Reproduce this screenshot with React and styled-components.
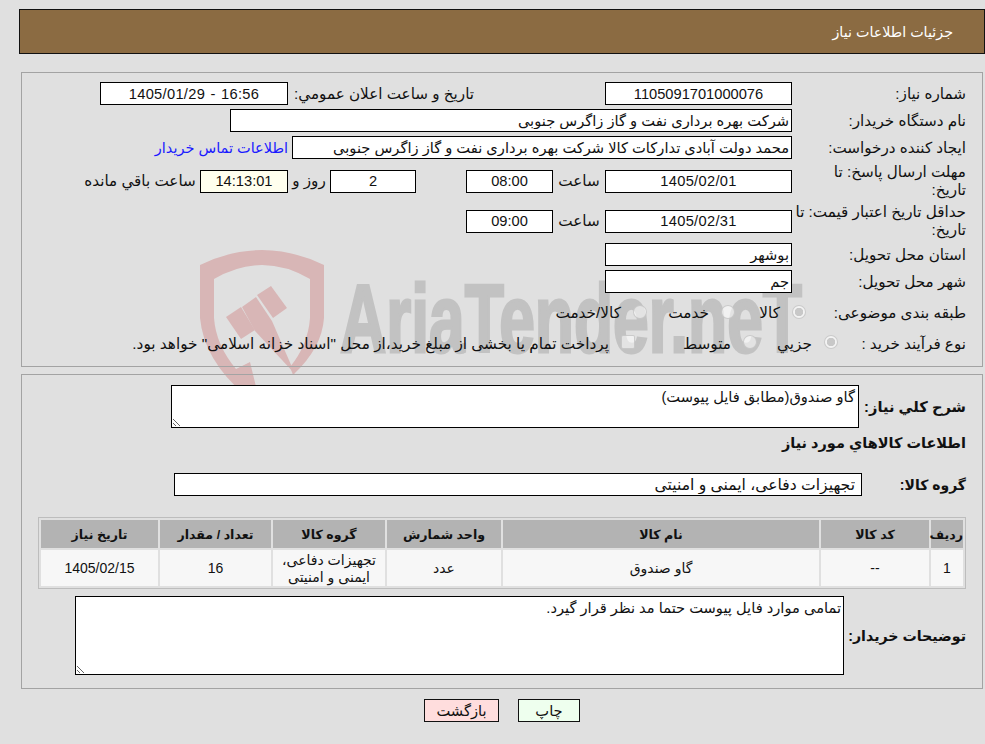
import React from 'react';
import styled, { createGlobalStyle } from 'styled-components';

const GlobalStyle = createGlobalStyle`
  * {
    box-sizing: border-box;
  }
  html,
  body {
    margin: 0;
    height: 744px;
    overflow: hidden;
    background: #e0e0e0;
  }
  body {
    font-family: 'Liberation Sans', 'DejaVu Sans', sans-serif;
    font-size: 14.67px;
    color: #111;
  }
`;

const Page = styled.div`
  position: relative;
  width: 985px;
  height: 744px;
  padding-top: 9px;
`;

/* AriaTender stamp sits behind the whole form */
const Watermark = styled.svg`
  position: absolute;
  top: 0;
  left: 0;
  width: 985px;
  height: 744px;
`;

const Content = styled.div`
  position: relative;
`;

const Header = styled.div`
  display: flex;
  align-items: center;
  height: 45px;
  margin-left: 19px;
  padding-right: 31px;
  background: #8b6b42;
  border: 1px solid #111;
  color: #fff;
  font-size: 14.3px;
`;

const Panel = styled.section`
  width: 962px;
  margin: ${(props) => props.$top}px 2px 0 0;
  padding: ${(props) => props.$pad};
  border: 1px solid #a3a3a3;
`;

const Row = styled.div`
  display: flex;
  align-items: center;
  height: ${(props) => props.$h}px;
`;

const Label = styled.div`
  flex: none;
  width: ${(props) => props.$w}px;
  line-height: 18px;
  font-size: ${(props) => props.$size || 15.2}px;
  font-weight: ${(props) => (props.$bold ? 700 : 400)};
`;

const Field = styled.input`
  flex: none;
  width: ${(props) => props.$w}px;
  height: 23px;
  padding: 0 2px;
  border: 1px solid #000;
  border-radius: 0;
  outline: none;
  background: ${(props) => props.$bg || '#fff'};
  color: #111;
  font: inherit;
  text-align: ${(props) => props.$align || 'center'};
`;

const DateField = styled(Field)`
  letter-spacing: 0.3px;
`;

const DateRangeField = styled(DateField)`
  word-spacing: 1px;
`;

const GroupField = styled(Field)`
  padding-right: 6px;
  font-size: 15.6px;
`;

const Caption = styled.div`
  flex: none;
  width: ${(props) => props.$w}px;
  font-size: 15.2px;
  text-align: ${(props) => props.$align || 'center'};
`;

const Spacer = styled.div`
  flex: none;
  width: ${(props) => props.$w}px;
`;

const ContactLink = styled.a`
  margin-right: 4px;
  color: #1a1aff;
  font-size: 14.5px;
  text-decoration: none;
`;

const Option = styled.label`
  display: flex;
  flex: none;
  align-items: center;
  gap: 12px;
  width: ${(props) => props.$w}px;
  font-size: 15.3px;
  white-space: nowrap;
`;

/* disabled controls are washed out so the stamp shows through them */
const Check = styled.input`
  flex: none;
  appearance: none;
  width: 14px;
  height: 14px;
  margin: 0 0 3px;
  border: 1px solid rgba(190, 190, 190, 0.75);
  border-radius: 2px;
  background: rgba(255, 255, 255, 0.55);

  &[type='radio'] {
    border-radius: 50%;
  }

  &:checked {
    background: radial-gradient(circle, #c8c8c8 0 4px, rgba(255, 255, 255, 0.6) 4.5px);
  }
`;

const Note = styled.textarea`
  flex: none;
  display: block;
  width: ${(props) => props.$w}px;
  height: ${(props) => props.$h}px;
  padding: 2px ${(props) => props.$inset || 2}px 2px 2px;
  border: 1px solid #000;
  border-radius: 0;
  outline: none;
  background: #fff;
  color: #111;
  font: inherit;
  overflow: hidden;
`;

const SectionTitle = styled.div`
  display: flex;
  align-items: center;
  height: 30px;
  font-weight: 700;
  font-size: 14.5px;
`;

const GroupRow = styled(Row)`
  margin-top: 15px;
`;

const ItemsTable = styled.table`
  width: 928px;
  height: 72px;
  margin-top: 21px;
  border: 1px solid #bdbdbd;
  border-spacing: 2px;
  table-layout: fixed;
  font-size: 14px;
`;

const HeadCell = styled.th`
  width: ${(props) => props.$w}px;
  height: 28px;
  padding: 0;
  background: #b3b3b3;
  font-size: 12.6px;
  font-weight: 700;
`;

const DataCell = styled.td`
  padding: 1px 2px 0;
  background: #f7f7f7;
  text-align: center;
  line-height: 17px;
`;

const NotesRow = styled(Row)`
  margin-top: 7px;
`;

const Actions = styled.div`
  display: flex;
  justify-content: center;
  gap: 19px;
  width: 962px;
  margin: 10px 2px 0 0;
`;

const ActionButton = styled.button`
  width: ${(props) => props.$w}px;
  height: 23px;
  padding: 0;
  border: 1px solid #111;
  border-radius: 0;
  background: ${(props) => props.$bg};
  color: #111;
  font: inherit;
`;

const columns = [
  { title: 'ردیف', width: 32 },
  { title: 'کد کالا', width: 108 },
  { title: 'نام کالا', width: 316 },
  { title: 'واحد شمارش', width: 114 },
  { title: 'گروه کالا', width: 112 },
  { title: 'تعداد / مقدار', width: 111 },
  { title: 'تاریخ نیاز', width: 117 },
];

const App = () => (
  <Page>
    <GlobalStyle />
    <Watermark viewBox="0 0 985 744" aria-hidden="true">
      <g fill="#d8b6b6">
        <path d="M200 265Q262 235 324 265V318Q322 348 293 375L290 367Q308 345 310 318V279Q262 251 214 279V318Q216 345 236 369L250 362L258 395H245Q204 360 200 318Z" />
        <path d="M226 317L241 307L255 330L241 339Z" />
        <path d="M242 307L256 297L272 321L295 374L255 331Z" />
        <path d="M257 295L271 286L287 308L273 318Z" />
      </g>
      <text
        x="340"
        y="352"
        fill="#c2c2c2"
        stroke="#c2c2c2"
        strokeWidth="3"
        fontFamily="Liberation Sans, sans-serif"
        fontSize="96"
        fontWeight="700"
        textLength="462"
        lengthAdjust="spacingAndGlyphs"
      >
        AriaTender.neT
      </text>
    </Watermark>
    <Content dir="rtl">
      <Header>جزئیات اطلاعات نیاز</Header>

      <Panel $top={18} $pad="7px 16px 10px 0">
        <Row $h={27}>
          <Label $w={174}>شماره نیاز:</Label>
          <Field $w={187} readOnly value="1105091701000076" />
          <Spacer $w={131} />
          <Label $w={186}>تاريخ و ساعت اعلان عمومي:</Label>
          <DateRangeField $w={188} readOnly value="1405/01/29 - 16:56" dir="ltr" />
        </Row>
        <Row $h={27}>
          <Label $w={174}>نام دستگاه خریدار:</Label>
          <Field $w={562} $align="right" readOnly value="شرکت بهره برداری نفت و گاز زاگرس جنوبی" />
        </Row>
        <Row $h={27}>
          <Label $w={174}>ایجاد کننده درخواست:</Label>
          <Field $w={500} $align="right" readOnly value="محمد دولت آبادی تدارکات کالا شرکت بهره برداری نفت و گاز زاگرس جنوبی" />
          <ContactLink href="#">اطلاعات تماس خریدار</ContactLink>
        </Row>
        <Row $h={40}>
          <Label $w={174}>
            مهلت ارسال پاسخ: تا
            <br />
            تاریخ:
          </Label>
          <DateField $w={187} readOnly value="1405/02/01" />
          <Caption $w={52}>ساعت</Caption>
          <Field $w={87} readOnly value="08:00" />
          <Spacer $w={50} />
          <Field $w={86} readOnly value="2" />
          <Caption $w={42}>روز و</Caption>
          <Field $w={88} $bg="#ffffee" readOnly value="14:13:01" />
          <Caption $w={118} $align="right">&nbsp;ساعت باقي مانده</Caption>
        </Row>
        <Row $h={40}>
          <Label $w={174}>
            حداقل تاریخ اعتبار قیمت: تا
            <br />
            تاریخ:
          </Label>
          <DateField $w={187} readOnly value="1405/02/31" />
          <Caption $w={52}>ساعت</Caption>
          <Field $w={87} readOnly value="09:00" />
        </Row>
        <Row $h={27}>
          <Label $w={174}>استان محل تحویل:</Label>
          <Field $w={187} $align="right" readOnly value="بوشهر" />
        </Row>
        <Row $h={27}>
          <Label $w={174}>شهر محل تحویل:</Label>
          <Field $w={187} $align="right" readOnly value="جم" />
        </Row>
        <Row $h={36}>
          <Label $w={160}>طبقه بندی موضوعی:</Label>
          <Option $w={71}>
            <Check type="radio" name="category" disabled defaultChecked />
            کالا
          </Option>
          <Option $w={88}>
            <Check type="radio" name="category" disabled />
            خدمت
          </Option>
          <Option $w={110}>
            <Check type="radio" name="category" disabled />
            کالا/خدمت
          </Option>
        </Row>
        <Row $h={25}>
          <Label $w={128}>نوع فرآیند خرید :</Label>
          <Option $w={81}>
            <Check type="radio" name="process" disabled defaultChecked />
            جزيي
          </Option>
          <Option $w={122}>
            <Check type="radio" name="process" disabled />
            متوسط
          </Option>
          <Option $w={500}>
            <Check type="checkbox" disabled />
            پرداخت تمام یا بخشی از مبلغ خرید،از محل "اسناد خزانه اسلامی" خواهد بود.
          </Option>
        </Row>
      </Panel>

      <Panel $top={7} $pad="10px 16px 13px 16px">
        <Row $h={43}>
          <Label $w={107} $size={14.67} $bold>شرح کلي نیاز:</Label>
          <Note $w={688} $h={43} $inset={3} readOnly value="گاو صندوق(مطابق فایل پیوست)" />
        </Row>
        <SectionTitle>اطلاعات کالاهاي مورد نیاز</SectionTitle>
        <GroupRow $h={23}>
          <Label $w={104} $size={14} $bold>گروه کالا:</Label>
          <GroupField $w={688} $align="right" readOnly value="تجهیزات دفاعی، ایمنی و امنیتی" />
        </GroupRow>
        <ItemsTable>
          <thead>
            <tr>
              {columns.map((col) => (
                <HeadCell key={col.title} $w={col.width}>{col.title}</HeadCell>
              ))}
            </tr>
          </thead>
          <tbody>
            <tr>
              <DataCell>1</DataCell>
              <DataCell>--</DataCell>
              <DataCell>گاو صندوق</DataCell>
              <DataCell>عدد</DataCell>
              <DataCell>تجهیزات دفاعی، ایمنی و امنیتی</DataCell>
              <DataCell>16</DataCell>
              <DataCell>1405/02/15</DataCell>
            </tr>
          </tbody>
        </ItemsTable>
        <NotesRow $h={79}>
          <Label $w={122} $size={14.2} $bold>توضیحات خریدار:</Label>
          <Note $w={769} $h={79} readOnly value="تمامی موارد فایل پیوست حتما مد نظر قرار گیرد." />
        </NotesRow>
      </Panel>

      <Actions>
        <ActionButton $w={62} $bg="#eeffee">چاپ</ActionButton>
        <ActionButton $w={75} $bg="#ffdddd">بازگشت</ActionButton>
      </Actions>
    </Content>
  </Page>
);

export default App;
